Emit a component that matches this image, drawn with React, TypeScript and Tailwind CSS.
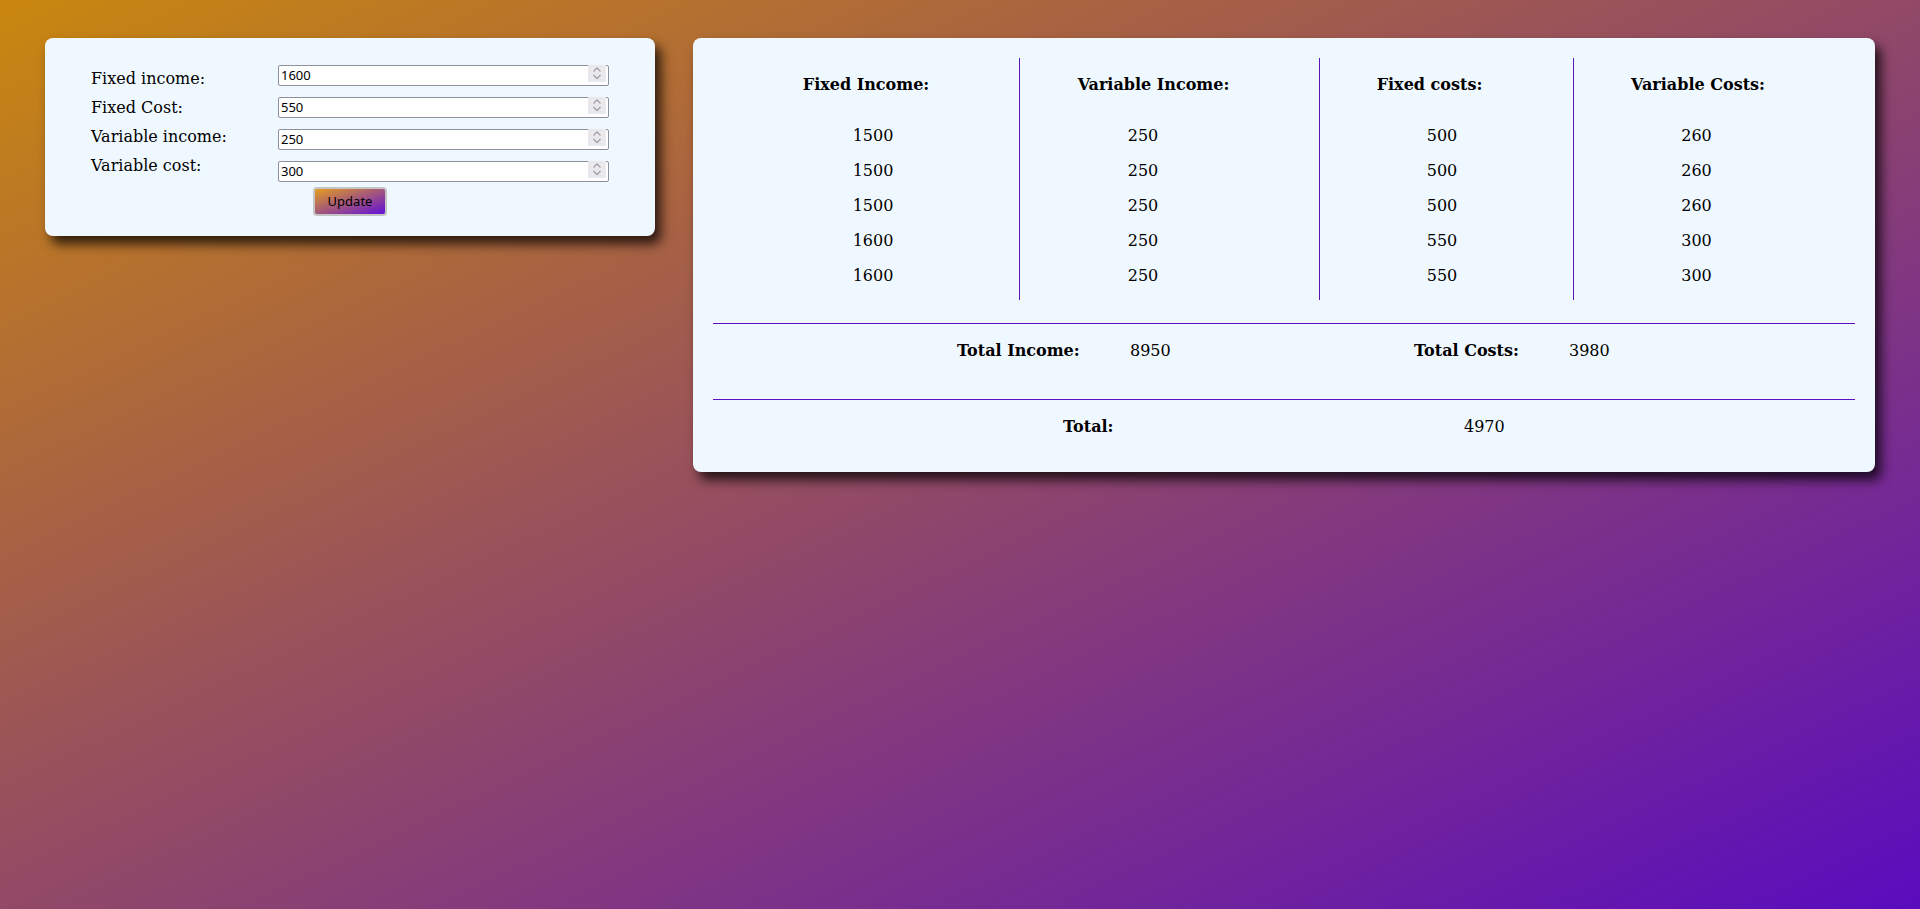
import { useState } from 'react'

const rows = [
  { fi: 1500, vi: 250, fc: 500, vc: 260 },
  { fi: 1500, vi: 250, fc: 500, vc: 260 },
  { fi: 1500, vi: 250, fc: 500, vc: 260 },
  { fi: 1600, vi: 250, fc: 550, vc: 300 },
  { fi: 1600, vi: 250, fc: 550, vc: 300 },
]

function NumberField({ value, onChange }: { value: string; onChange: (v: string) => void }) {
  return (
    <div className="relative h-[21px] w-full">
      <input
        type="number"
        value={value}
        onChange={(e) => onChange(e.target.value)}
        className="h-full w-full bg-white border border-[#8f8f9d] rounded-[2px] pl-[2px] pr-[24px] text-[13px] text-black font-['Noto_Sans',sans-serif] outline-none [appearance:textfield] [&::-webkit-inner-spin-button]:appearance-none [&::-webkit-outer-spin-button]:appearance-none"
      />
      {/* spinner */}
      <div className="absolute right-[3px] top-[2px] w-[18px] h-[17px] bg-[#e9e9ed] pointer-events-none">
        <svg width="18" height="17" viewBox="0 0 18 17" fill="none" stroke="#a2a2a9" strokeWidth="1.3">
          <path d="M5.5 6.5 L9 3 L12.5 6.5" />
          <path d="M5.5 10 L9 13.5 L12.5 10" />
        </svg>
      </div>
    </div>
  )
}

export default function App() {
  const [fixedIncome, setFixedIncome] = useState('1600')
  const [fixedCost, setFixedCost] = useState('550')
  const [variableIncome, setVariableIncome] = useState('250')
  const [variableCost, setVariableCost] = useState('300')

  return (
    <div className="min-h-screen w-full bg-[linear-gradient(to_bottom_right,#c9870f,#5a0cbe)] flex items-start gap-[38px] px-[45px] pt-[38px] font-['DejaVu_Serif',serif] text-black">
      {/* Form card */}
      <div className="w-[610px] flex-none bg-[#f0f8ff] rounded-lg shadow-[6px_8px_12px_rgba(0,0,0,0.75)] pt-[25px] pb-[20px] px-[46px]">
        <div className="flex">
          <div className="w-[187px] pt-[1px] text-[16px] leading-[29px]">
            <div>Fixed income:</div>
            <div>Fixed Cost:</div>
            <div>Variable income:</div>
            <div>Variable cost:</div>
          </div>
          <div className="w-[331px] flex flex-col gap-[11px]">
            <NumberField value={fixedIncome} onChange={setFixedIncome} />
            <NumberField value={fixedCost} onChange={setFixedCost} />
            <NumberField value={variableIncome} onChange={setVariableIncome} />
            <NumberField value={variableCost} onChange={setVariableCost} />
          </div>
        </div>
        <div className="flex justify-center mt-[7px]">
          <button className="w-[74px] h-[29px] rounded-[4px] border-2 border-[#c4c4c4] bg-[linear-gradient(to_bottom_right,#e49d20,#6210d8)] text-[13px] text-black font-['Noto_Sans',sans-serif]">
            Update
          </button>
        </div>
      </div>

      {/* Summary card */}
      <div className="flex-1 bg-[#f0f8ff] rounded-lg shadow-[6px_8px_12px_rgba(0,0,0,0.75)] pt-[20px] pb-[33px] pl-[20px] pr-[20px]">
        <div className="flex text-[16px]">
          <div className="w-[306px] flex-none pt-[9px] pb-[7px]">
            <div className="h-[35px] leading-[35px] font-bold text-center">Fixed Income:</div>
            <div className="mt-[16px]">
              {rows.map((r, i) => (
                <div key={i} className="h-[35px] leading-[35px] text-center pl-[14px]">{r.fi}</div>
              ))}
            </div>
          </div>
          <div className="w-[300px] flex-none pt-[9px] pb-[7px] border-l border-[#5b16b5]">
            <div className="h-[35px] leading-[35px] font-bold text-center pr-[32px]">Variable Income:</div>
            <div className="mt-[16px]">
              {rows.map((r, i) => (
                <div key={i} className="h-[35px] leading-[35px] text-center pr-[53px]">{r.vi}</div>
              ))}
            </div>
          </div>
          <div className="w-[254px] flex-none pt-[9px] pb-[7px] border-l border-[#5b16b5]">
            <div className="h-[35px] leading-[35px] font-bold text-center pr-[34px]">Fixed costs:</div>
            <div className="mt-[16px]">
              {rows.map((r, i) => (
                <div key={i} className="h-[35px] leading-[35px] text-center pr-[9px]">{r.fc}</div>
              ))}
            </div>
          </div>
          <div className="flex-1 pt-[9px] pb-[7px] border-l border-[#5b16b5]">
            <div className="h-[35px] leading-[35px] font-bold text-center pr-[33px]">Variable Costs:</div>
            <div className="mt-[16px]">
              {rows.map((r, i) => (
                <div key={i} className="h-[35px] leading-[35px] text-center pr-[36px]">{r.vc}</div>
              ))}
            </div>
          </div>
        </div>

        <div className="mt-[23px] h-px bg-[#5c10c6]" />

        <div className="mt-[15px] flex text-[16px] leading-[24px]">
          <div className="ml-[244px] w-[173px] font-bold">Total Income:</div>
          <div className="w-[284px]">8950</div>
          <div className="w-[155px] font-bold">Total Costs:</div>
          <div>3980</div>
        </div>

        <div className="mt-[36px] h-px bg-[#5c10c6]" />

        <div className="mt-[15px] flex text-[16px] leading-[24px]">
          <div className="ml-[350px] w-[401px] font-bold">Total:</div>
          <div>4970</div>
        </div>
      </div>
    </div>
  )
}
